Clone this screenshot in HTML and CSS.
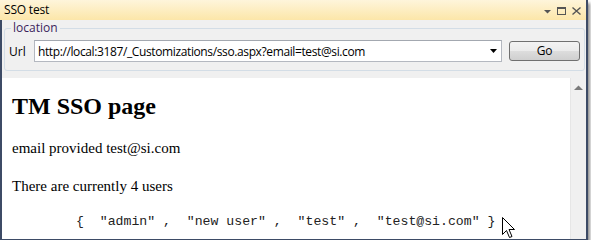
FILE: index.html
```html
<!DOCTYPE html>
<html>
<head>
<meta charset="utf-8">
<link rel="stylesheet" href="styles.css">
</head>
<body>
<div class="window">
  <div class="titlebar">
    <span class="title">SSO test</span>
    <div class="title-icons">
      <svg class="ico" width="9" height="9" viewBox="0 0 9 9"><path d="M1 3h7L4.5 6.5z" fill="#555"/></svg>
      <svg class="ico" width="11" height="10" viewBox="0 0 11 10"><rect x="1.5" y="1.5" width="8" height="7" fill="none" stroke="#555" stroke-width="1"/><rect x="1" y="1" width="9" height="2" fill="#555"/></svg>
      <svg class="ico" width="11" height="10" viewBox="0 0 11 10"><path d="M1.5 1.5l8 7M9.5 1.5l-8 7" stroke="#555" stroke-width="1.4"/></svg>
    </div>
  </div>
  <div class="body">
    <div class="panel">
      <fieldset class="group">
        <legend class="legend">location</legend>
        <div class="row">
          <span class="label">Url</span>
          <div class="combo">
            <span class="combo-text">http://local:3187/_Customizations/sso.aspx?email=test@si.com</span>
            <svg class="combo-arrow" width="7" height="4" viewBox="0 0 7 4"><path d="M0 0h7L3.5 4z" fill="#000"/></svg>
          </div>
          <button class="go">Go</button>
        </div>
      </fieldset>
    </div>
    <div class="content">
      <div class="page">
        <h1 class="heading">TM SSO page</h1>
        <p class="text">email provided test@si.com</p>
        <p class="text text-second">There are currently 4 users</p>
        <pre class="code">{  "admin" ,  "new user" ,  "test" ,  "test@si.com" }</pre>
      </div>
      <div class="scrollbar">
        <svg class="scroll-up" width="9" height="5" viewBox="0 0 9 5"><path d="M0 5h9L4.5 0.5z" fill="#7a7a7a"/></svg>
      </div>
    </div>
  </div>
  <svg class="cursor" width="13" height="22" viewBox="0 0 13 22"><path d="M0.5 0.5V17.5L4.5 13.5L7.5 20.5L10 19.5L7 12.5H12.5Z" fill="#fff" stroke="#000" stroke-width="1" stroke-linejoin="miter"/></svg>
</div>
</body>
</html>
```
FILE: styles.css
```css
html, body {
  margin: 0;
  padding: 0;
  background: #fff;
}
.window {
  position: relative;
  width: 586px;
  height: 239px;
  border-right: 2px solid #3d4b66;
  border-bottom: 1px solid #3d4b66;
  display: flex;
  flex-direction: column;
  box-shadow: 2px 3px 3px rgba(0, 0, 0, 0.45);
  font-family: "Open Sans", "DejaVu Sans", sans-serif;
  font-size: 12px;
}
.titlebar {
  height: 20px;
  flex: none;
  display: flex;
  align-items: center;
  justify-content: space-between;
  background: linear-gradient(#fef5db, #fce6a9);
  padding: 0 4px 0 4px;
  box-sizing: border-box;
}
.title {
  color: #000;
  font-size: 12px;
  letter-spacing: -0.2px;
  line-height: 16px;
}
.title-icons {
  display: flex;
  align-items: center;
  gap: 4px;
  padding-top: 2px;
}
.ico {
  display: block;
}
.body {
  flex: 1;
  display: flex;
  flex-direction: column;
  border-left: 2px solid #3d4b66;
  min-height: 0;
}
.panel {
  height: 58px;
  flex: none;
  background: #f0f0f0;
  padding: 1px 1px 0 2px;
  box-sizing: border-box;
}
.group {
  margin: 0;
  padding: 5px 4px 8px 3px;
  border: 1px solid #d3dde6;
  border-radius: 3px;
  min-width: 0;
}
.legend {
  padding: 0 2px;
  margin-left: 3px;
  line-height: 14px;
  font-size: 12px;
  color: #3a1f5c;
}
.row {
  display: flex;
  align-items: center;
  height: 22px;
}
.label {
  width: 25px;
  color: #000;
  padding-left: 1px;
}
.combo {
  width: 470px;
  height: 22px;
  box-sizing: border-box;
  background: #fff;
  border: 1px solid #b4b8c0;
  border-top-color: #a3a8b0;
  display: flex;
  align-items: center;
  justify-content: space-between;
  padding: 0 4px 0 3px;
}
.combo-text {
  color: #000;
  letter-spacing: -0.38px;
}
.combo-arrow {
  display: block;
}
.go {
  margin-left: 7px;
  width: 71px;
  height: 20px;
  border: 1px solid #707070;
  border-radius: 3px;
  background: linear-gradient(#f3f3f3 0%, #ebebeb 50%, #dddddd 51%, #cfcfcf 100%);
  font-family: "Open Sans", "DejaVu Sans", sans-serif;
  font-size: 12px;
  color: #000;
  padding: 0;
  line-height: 16px;
}
.content {
  flex: 1;
  display: flex;
  background: #fff;
  min-height: 0;
}
.page {
  flex: 1;
  padding: 14px 0 0 10px;
  overflow: hidden;
}
.heading {
  margin: 0;
  font: bold 24px/28px "Liberation Serif", "Times New Roman", serif;
  color: #000;
}
.text {
  margin: 19px 0 0;
  font: 15px/18px "Liberation Serif", "Times New Roman", serif;
  color: #000;
}
.text-second {
  margin-top: 20px;
}
.code {
  margin: 19px 0 0 64px;
  font: 13.2px/16px "Liberation Mono", "Courier New", monospace;
  color: #222;
}
.scrollbar {
  width: 16px;
  flex: none;
  background: #f0f0f0;
  border-left: 1px solid #e6e6e6;
  display: flex;
  justify-content: center;
  padding-top: 7px;
  box-sizing: border-box;
}
.scroll-up {
  display: block;
}
.cursor {
  position: absolute;
  left: 502px;
  top: 217px;
}
```
